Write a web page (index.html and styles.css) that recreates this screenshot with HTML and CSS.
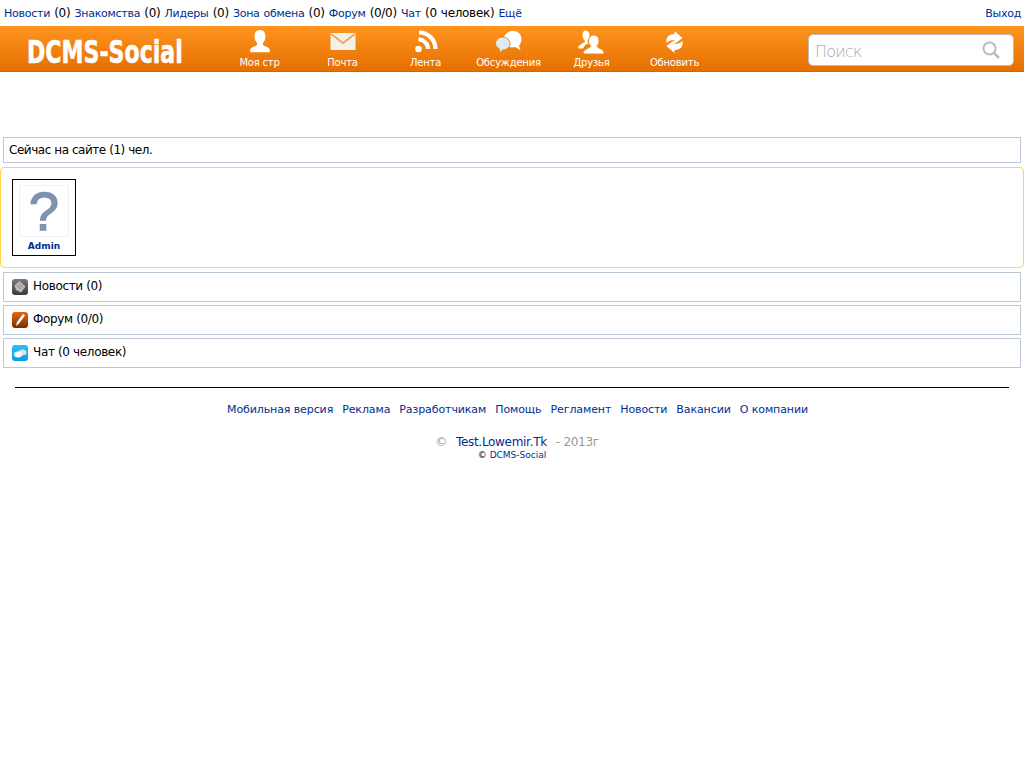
FILE: index.html
```html
<!DOCTYPE html>
<html lang="ru">
<head>
    <meta charset="UTF-8">
    <title>Сейчас на сайте</title>
    <link rel="stylesheet" href="styles.css">
</head>
<body>

    <!-- Top links -->
    <div class="toplinks">
        <div>
            <a href="#">Новости</a> (0)
            <a href="#">Знакомства</a> (0)
            <a href="#">Лидеры</a> (0)
            <a href="#">Зона обмена</a> (0)
            <a href="#">Форум</a> (0/0)
            <a href="#">Чат</a> (0 человек)
            <a href="#">Ещё</a>
        </div>
        <a href="#">Выход</a>
    </div>

    <!-- Orange header -->
    <div class="header">
        <div class="logo"><span class="logo-text">DCMS-Social</span></div>
        <div class="nav">
            <a class="nav-item" href="#">
                <svg class="nav-icon" viewBox="0 0 26 26"><path d="M13 1c3.500 0 5.500 2.800 5.500 6.500 0 3-1.300 5.200-2.700 6.700 0 2 1 2.500 3.700 3.500 2.300 1 3.500 2 3.500 4 0 1-.8 1.500-2 1.500H5c-1.200 0-2-.5-2-1.500 0-2 1.200-3 3.500-4 2.700-1 3.700-1.500 3.700-3.500-1.400-1.500-2.700-3.700-2.700-6.700C7.500 3.800 9.500 1 13 1z" fill="#fff"/></svg>
                Моя стр
            </a>
            <a class="nav-item" href="#">
                <svg class="nav-icon" viewBox="0 0 26 26"><rect x="0.500" y="4" width="25" height="17" fill="#f4f1ec"/><path d="M1 5l12 9L25 5" fill="none" stroke="#eea65c" stroke-width="1.800"/></svg>
                Почта
            </a>
            <a class="nav-item" href="#">
                <svg class="nav-icon" viewBox="0 0 26 26"><circle cx="5.500" cy="20" r="3.300" fill="#fff"/><path d="M5.500 10.500a9.500 9.500 0 0 1 9.500 9.500M6 3.500A16.500 16.500 0 0 1 22.500 20" fill="none" stroke="#fff" stroke-width="4.200"/></svg>
                Лента
            </a>
            <a class="nav-item" href="#">
                <svg class="nav-icon wide" viewBox="0 0 32 26"><path d="M20 2c5 0 8.500 3.500 8.500 8 0 3-1 5-2.500 6.500l1.500 4.500-5.500-3c-3 .8-6 .5-8-1-3-2-5-6-2-11 2-2.500 5-4 8-4z" fill="#fff"/><path d="M9.500 8C14 8 17 11 17 14.500S14 21 9.500 21l-3 3 0-4C4 18.500 2.500 16.500 2.500 14.500 2.500 11 5.500 8 9.500 8z" fill="#dcebf0" stroke="#f08a1c"/></svg>
                Обсуждения
            </a>
            <a class="nav-item" href="#">
                <svg class="nav-icon wide" viewBox="0 0 32 26"><path d="M9 1.500c3 0 4.500 2.300 4.500 5 0 2.500-1.500 4-2 5.500 0 1 .5 1.500 1.500 2-3 1-5 3-6 5.500H3c-1 0-1-1-.5-2 1-1.500 2.500-2.500 4-3.300 1.500-.8 2.500-1.200 2.500-2.200-1-1-2.500-3-2.500-5.500 0-2.500 1-5 2.500-5z" fill="#fff"/><path d="M18 6c3.500 0 5 3 5 6 0 2-1 4-2 5 0 1 1 1.500 3 2.500 2 1 4 2 4 4 0 1-.5 1.500-1.500 1.500H9c-1 0-1.500-.5-1.500-1.500 0-2 2-3 4-4 2-1 3-1.500 3-2.500-1-1-2-3-2-5 0-3 2-6 5.500-6z" fill="#fff" stroke="#f58a16"/></svg>
                Друзья
            </a>
            <a class="nav-item" href="#">
                <svg class="nav-icon" viewBox="0 0 26 26"><path d="M4.500 14c-1-5 2-9 8-9V2l8 7-8 6v-4c-4 0-6 1-8 3z" fill="#fff"/><path d="M4.500 14c-1-5 2-9 8-9V2l8 7-8 6v-4c-4 0-6 1-8 3z" fill="#fff" transform="rotate(180 12.500 13)"/></svg>
                Обновить
            </a>
        </div>
        <div class="search">
            <span class="search-text">Поиск</span>
            <svg class="search-icon" viewBox="0 0 18 18"><circle cx="7.500" cy="7.500" r="6" fill="none" stroke="#bbb" stroke-width="2"/><path d="M12 12l5 5" stroke="#bbb" stroke-width="2.500"/></svg>
        </div>
    </div>

    <div class="box online-title">Сейчас на сайте (1) чел.</div>

    <div class="online-list">
        <a class="user-card" href="#">
            <svg class="avatar" viewBox="0 0 50 52"><text x="25" y="46" text-anchor="middle" class="avatar-mark">?</text></svg>
            <span class="user-name">Admin</span>
        </a>
    </div>

    <a class="box menu-row" href="#">
        <svg class="menu-icon" viewBox="0 0 16 16">
            <defs><linearGradient id="newsBg" x1="0" y1="0" x2="0" y2="1"><stop offset="0" stop-color="#7a7a7a"/><stop offset="1" stop-color="#3a3a3a"/></linearGradient></defs>
            <rect width="16" height="16" rx="3" fill="url(#newsBg)"/>
            <path d="M2.500 6.500l5-4.500 6 5.500-4.500 6-5-2.500z" fill="#b9b9b9"/>
            <path d="M5 6l4 4M7 4.500l4 4" stroke="#8a8a8a"/>
        </svg>
        Новости (0)
    </a>
    <a class="box menu-row" href="#">
        <svg class="menu-icon" viewBox="0 0 16 16">
            <defs><linearGradient id="forumBg" x1="0" y1="0" x2="0" y2="1"><stop offset="0" stop-color="#e06a10"/><stop offset="1" stop-color="#7a2e04"/></linearGradient></defs>
            <rect width="16" height="16" rx="3" fill="url(#forumBg)"/>
            <path d="M4 14l1-4 6-8 2 1.500-6 8z" fill="#fff"/>
        </svg>
        Форум (0/0)
    </a>
    <a class="box menu-row" href="#">
        <svg class="menu-icon" viewBox="0 0 16 16">
            <defs><linearGradient id="chatBg" x1="0" y1="0" x2="0" y2="1"><stop offset="0" stop-color="#2cc0f8"/><stop offset="1" stop-color="#0a9ae0"/></linearGradient></defs>
            <rect width="16" height="16" rx="3" fill="url(#chatBg)"/>
            <ellipse cx="10.500" cy="7.500" rx="4" ry="3" fill="#d8e0e4"/>
            <ellipse cx="6" cy="9.500" rx="4" ry="3" fill="#fff"/>
        </svg>
        Чат (0 человек)
    </a>

    <!-- Footer -->
    <div class="footer">
        <div class="footer-line"></div>
        <div class="footer-links">
            <a href="#">Мобильная версия</a>
            <a href="#">Реклама</a>
            <a href="#">Разработчикам</a>
            <a href="#">Помощь</a>
            <a href="#">Регламент</a>
            <a href="#">Новости</a>
            <a href="#">Вакансии</a>
            <a href="#">О компании</a>
        </div>
        <div class="copyright">©<a class="site-link" href="#">Test.Lowemir.Tk</a>- 2013г</div>
        <div class="engine">© <a href="#">DCMS-Social</a></div>
    </div>

</body>
</html>
```
FILE: styles.css
```css
* {
    box-sizing: border-box;
}

body {
    margin: 0;
    font-family: "DejaVu Sans", sans-serif;
    font-size: 12px;
    color: #000;
    background: #fff;
}

a {
    color: #002d8f;
    text-decoration: none;
}

.toplinks {
    display: flex;
    justify-content: space-between;
    height: 26px;
    padding: 6px 3px 0 4px;
    line-height: 15px;
    letter-spacing: -0.3px;
    word-spacing: 0.6px;
}

.toplinks a {
    font-size: 11px;
    letter-spacing: -0.25px;
}

.header {
    display: flex;
    align-items: flex-start;
    height: 46px;
    background: linear-gradient(#ff951f, #e56f00);
    border-bottom: 1px solid #d86400;
}

.logo {
    width: 218px;
    padding: 7px 0 0 27px;
    color: #fff;
    font-size: 32px;
    font-weight: bold;
    line-height: 38px;
    white-space: nowrap;
}

.logo-text {
    display: inline-block;
    transform: scaleX(0.69);
    transform-origin: left center;
    -webkit-text-stroke: 0.6px #fff;
}

.nav {
    display: flex;
    flex: 1;
}

.nav-item {
    display: flex;
    flex-direction: column;
    align-items: center;
    width: 83px;
    padding-top: 3px;
    color: #fff;
    font-size: 10px;
    line-height: 15px;
    letter-spacing: -0.2px;
    white-space: nowrap;
}

.nav-icon {
    width: 26px;
    height: 26px;
}

.nav-icon.wide {
    width: 32px;
}

.search {
    display: flex;
    align-items: center;
    justify-content: space-between;
    width: 206px;
    height: 32px;
    margin: 8px 10px 0 0;
    padding: 0 13px 0 6px;
    background: #fff;
    border: 1px solid #bbb;
    border-radius: 5px;
}

.search-text {
    padding-top: 3px;
    color: #aaa;
    font-size: 16px;
    font-weight: 200;
    letter-spacing: -0.8px;
}

.search-icon {
    width: 18px;
    height: 18px;
}

.box {
    display: block;
    margin: 0 3px;
    background: #fff;
    border: 1px solid #bcc7d6;
    color: #000;
}

.online-title {
    height: 26px;
    margin-top: 65px;
    padding-left: 5px;
    line-height: 25px;
    letter-spacing: -0.45px;
}

.online-list {
    height: 101px;
    margin: 4px 0;
    padding: 11px;
    border: 1px solid #ffd24d;
    border-radius: 4px;
}

.user-card {
    display: block;
    width: 64px;
    height: 77px;
    padding: 5px 6px 0;
    border: 1px solid #000;
    text-align: center;
}

.avatar {
    display: block;
    width: 50px;
    height: 52px;
    border: 1px solid #eef0f3;
}

.avatar-mark {
    fill: #7c93b1;
    stroke: #7c93b1;
    stroke-width: 1.5px;
    font-family: "Liberation Sans", sans-serif;
    font-size: 56px;
}

.user-name {
    display: block;
    margin-top: 3px;
    font-size: 9px;
    font-weight: bold;
    line-height: 12px;
}

.menu-row {
    display: flex;
    align-items: center;
    gap: 5px;
    height: 30px;
    margin-bottom: 3px;
    padding: 0 0 2px 8px;
    letter-spacing: -0.35px;
}

.menu-icon {
    width: 16px;
    height: 16px;
    margin-top: 2px;
}

.footer {
    padding: 16px 15px 0;
    text-align: center;
}

.footer-line {
    border-top: 1px solid #000;
}

.footer-links {
    display: flex;
    justify-content: center;
    gap: 9px;
    margin-top: 14px;
    padding-left: 11px;
    font-size: 11px;
    line-height: 15px;
    letter-spacing: -0.1px;
}

.copyright {
    margin-top: 18px;
    padding-left: 10px;
    color: #999;
    line-height: 15px;
    letter-spacing: -0.3px;
}

.site-link {
    margin: 0 9px;
}

.engine {
    font-size: 9px;
    line-height: 11px;
}
```
